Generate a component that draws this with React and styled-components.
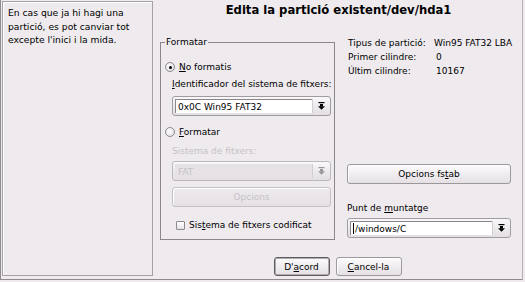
import React from "react";
import styled, { createGlobalStyle } from "styled-components";

const GlobalStyle = createGlobalStyle`
  html, body {
    margin: 0;
    padding: 0;
    background: #eeeaee;
  }
  body {
    font-family: "DejaVu Sans", "Noto Sans", sans-serif;
    font-size: 9px;
    color: #000;
    white-space: nowrap;
  }
  #root {
    width: 525px;
    height: 282px;
    overflow: hidden;
  }
`;

const Window = styled.div`
  box-sizing: border-box;
  width: 523px;
  height: 280px;
  display: flex;
  border-left: 1px solid #8e8a8e;
  border-right: 1px solid #b4b0b4;
  border-bottom: 1px solid #8e8a8e;
  padding: 1px 0 3px 1px;
`;

const HelpPanel = styled.div`
  box-sizing: border-box;
  width: 151px;
  flex: none;
  border: 1px solid #a4a0a4;
  box-shadow: inset 1px 1px 0 #ffffff;
  padding: 4px 5px;
  line-height: 13.5px;
  font-size: 9.2px;
`;

const Content = styled.div`
  flex: 1;
  display: flex;
  flex-direction: column;
`;

const Title = styled.div`
  height: 20px;
  line-height: 18px;
  text-align: center;
  font-weight: bold;
  font-size: 11.6px;
  padding-left: 2px;
`;

const MainRow = styled.div`
  display: flex;
  align-items: flex-start;
  padding-left: 7px;
  gap: 12px;
`;

const Group = styled.fieldset`
  box-sizing: border-box;
  width: 175px;
  margin: 16px 0 0;
  padding: 0 3px 7px 4px;
  min-width: 0;
  border: 1px solid #8a868a;
  display: flex;
  flex-direction: column;
`;

const GroupTitle = styled.legend`
  padding: 0 1px;
  line-height: 10px;
  font-size: 9px;
`;

const OptionRow = styled.label`
  display: flex;
  align-items: center;
  gap: 4px;
  height: 14px;
  margin-top: ${(p) => p.$top}px;
  margin-left: ${(p) => p.$indent || 0}px;
`;

const Radio = styled.span`
  box-sizing: border-box;
  width: 10px;
  height: 10px;
  border-radius: 50%;
  border: 1px solid #8c888c;
  background: radial-gradient(circle at 40% 40%, #ffffff, #dedade);
  display: flex;
  align-items: center;
  justify-content: center;
  &::after {
    content: "";
    width: 3px;
    height: 3px;
    border-radius: 50%;
    background: ${(p) => (p.$checked ? "#000" : "transparent")};
  }
`;

const Check = styled.span`
  box-sizing: border-box;
  width: 9px;
  height: 9px;
  border: 1px solid #8c888c;
  border-radius: 1px;
  background: linear-gradient(#ffffff, #e6e2e6);
`;

const Indented = styled.div`
  display: flex;
  flex-direction: column;
  margin-left: 7px;
`;

const FieldLabel = styled.div`
  height: 14px;
  line-height: 14px;
  margin-top: ${(p) => p.$top}px;
  color: ${(p) => (p.$disabled ? "#c6c2c6" : "#000")};
`;

const Mn = styled.span`
  text-decoration: underline;
`;

const Combo = styled.div`
  box-sizing: border-box;
  display: flex;
  height: 20px;
  margin-top: ${(p) => p.$top}px;
  border: 1px solid ${(p) => (p.$disabled ? "#bcb8bc" : "#a09ca0")};
  border-radius: 3px;
  background: linear-gradient(#faf8fa, #e2dee2);
  padding: 2px 0 2px 2px;
`;

const ComboField = styled.div`
  flex: 1;
  display: flex;
  align-items: center;
  padding-left: 2px;
  background: ${(p) => (p.$disabled ? "#e6e2e6" : "#ffffff")};
  border-top: 1px solid ${(p) => (p.$disabled ? "#e6e2e6" : "#8a868a")};
  border-left: 1px solid ${(p) => (p.$disabled ? "#e6e2e6" : "#8a868a")};
  color: ${(p) => (p.$disabled ? "#c6c2c6" : "#000")};
`;

const Caret = styled.span`
  width: 1px;
  height: 11px;
  background: #000;
  margin-right: 1px;
`;

const ComboArrow = styled.div`
  width: 17px;
  flex: none;
  display: flex;
  align-items: center;
  justify-content: center;
  border-left: 1px solid #d2ced2;
  color: ${(p) => (p.$disabled ? "#9a969a" : "#000")};
`;

const Button = styled.div`
  box-sizing: border-box;
  display: flex;
  align-items: center;
  justify-content: center;
  height: ${(p) => p.$h || 20}px;
  width: ${(p) => (p.$w ? `${p.$w}px` : "auto")};
  margin-top: ${(p) => p.$top || 0}px;
  border: 1px solid ${(p) => (p.$default ? "#5e5a5e" : p.$disabled ? "#c4c0c4" : "#9c989c")};
  box-shadow: ${(p) => (p.$default ? "inset 0 0 0 1px #b0acb0" : "inset 1px 1px 0 #ffffff")};
  border-radius: 3px;
  background: ${(p) =>
    p.$disabled ? "linear-gradient(#eeeaee, #e4e0e4)" : "linear-gradient(#fcfbfc, #e4e0e4)"};
  color: ${(p) => (p.$disabled ? "#c6c2c6" : "#000")};
`;

const InfoColumn = styled.div`
  width: 164px;
  display: flex;
  flex-direction: column;
  margin-top: 15px;
`;

const InfoGrid = styled.div`
  display: grid;
  grid-template-columns: 86px max-content;
  line-height: 14px;
  padding-left: 1px;
`;

const Value = styled.span`
  padding-left: ${(p) => p.$pad || 0}px;
`;

const ButtonRow = styled.div`
  display: flex;
  justify-content: center;
  gap: 6px;
  margin-top: 17px;
`;

function ArrowIcon() {
  return (
    <svg width="7" height="8" viewBox="0 0 7 8">
      <rect x="0.5" y="0" width="6" height="1.2" fill="currentColor" />
      <rect x="2" y="2" width="3" height="2.5" fill="currentColor" />
      <polygon points="0,4.3 7,4.3 3.5,7.8" fill="currentColor" />
    </svg>
  );
}

function ComboBox({ children, disabled, top, caret }) {
  return (
    <Combo $disabled={disabled} $top={top}>
      <ComboField $disabled={disabled}>
        {caret && <Caret />}
        {children}
      </ComboField>
      <ComboArrow $disabled={disabled}>
        <ArrowIcon />
      </ComboArrow>
    </Combo>
  );
}

export default function App() {
  return (
    <>
      <GlobalStyle />
      <Window>
        <HelpPanel>
          En cas que ja hi hagi una
          <br />
          partició, es pot canviar tot
          <br />
          excepte l'inici i la mida.
        </HelpPanel>
        <Content>
          <Title>Edita la partició existent/dev/hda1</Title>
          <MainRow>
            <Group>
              <GroupTitle>Formatar</GroupTitle>
              <OptionRow $top={13}>
                <Radio $checked />
                <span>
                  <Mn>N</Mn>o formatis
                </span>
              </OptionRow>
              <Indented>
                <FieldLabel $top={3}>
                  <Mn>I</Mn>dentificador del sistema de fitxers:
                </FieldLabel>
                <ComboBox top={5}>0x0C Win95 FAT32</ComboBox>
              </Indented>
              <OptionRow $top={9}>
                <Radio />
                <span>
                  <Mn>F</Mn>ormatar
                </span>
              </OptionRow>
              <Indented>
                <FieldLabel $top={5} $disabled>
                  Sistema de fitxers:
                </FieldLabel>
                <ComboBox top={3} disabled>
                  FAT
                </ComboBox>
                <Button $top={6} $disabled>
                  Opcions
                </Button>
              </Indented>
              <OptionRow $top={11} $indent={11}>
                <Check />
                <span>
                  Sis<Mn>t</Mn>ema de fitxers codificat
                </span>
              </OptionRow>
            </Group>
            <InfoColumn>
              <InfoGrid>
                <span>Tipus de partició:</span>
                <Value>Win95 FAT32 LBA</Value>
                <span>Primer cilindre:</span>
                <Value $pad={2}>0</Value>
                <span>Últim cilindre:</span>
                <Value $pad={2}>10167</Value>
              </InfoGrid>
              <Button $top={86}>
                Opcions fs<Mn>t</Mn>ab
              </Button>
              <FieldLabel $top={17}>
                Punt de <Mn>m</Mn>untatge
              </FieldLabel>
              <ComboBox top={3} caret>
                /windows/C
              </ComboBox>
            </InfoColumn>
          </MainRow>
          <ButtonRow>
            <Button $default $w={56} $h={19}>
              D'<Mn>a</Mn>cord
            </Button>
            <Button $w={66} $h={19}>
              <span>
                <Mn>C</Mn>ancel-la
              </span>
            </Button>
          </ButtonRow>
        </Content>
      </Window>
    </>
  );
}
